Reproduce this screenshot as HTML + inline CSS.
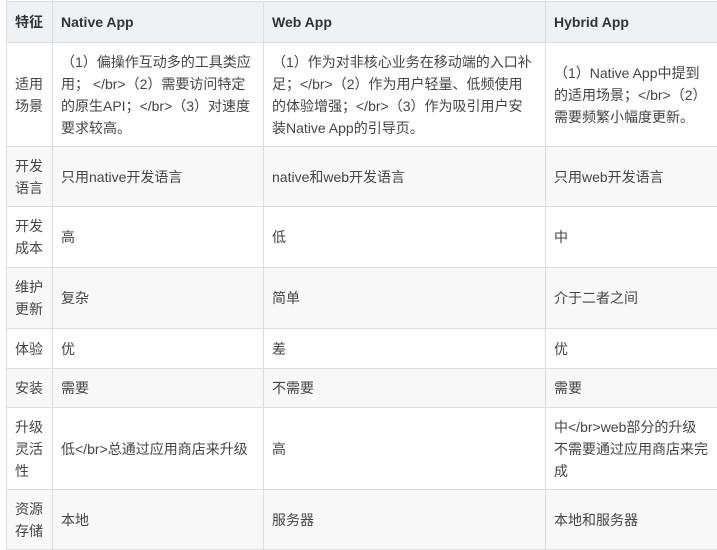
<!DOCTYPE html>
<html><head><meta charset="utf-8"><style>
body{margin:0;background:#fff;font-family:"Liberation Sans","Noto Sans CJK SC",sans-serif;font-size:14px;color:#444;}
table{position:absolute;left:6px;top:1px;border-collapse:collapse;table-layout:fixed;width:716px;}
td,th{border:1px solid #ddd;padding:0 4px 0 8px;line-height:22px;text-align:left;vertical-align:middle;overflow:hidden;}
th{background:#eff2f5;font-weight:bold;font-size:14px;height:40px;color:#333;}
tr.g td{background:#f8f8f8;}
td:nth-child(2),td:nth-child(3){padding-right:12px;}
td:nth-child(4){padding-right:14px;}
</style></head><body>
<table>
<colgroup><col style="width:46px"><col style="width:211px"><col style="width:282px"><col style="width:177px"></colgroup>
<tr><th>特征</th><th>Native App</th><th>Web App</th><th>Hybrid App</th></tr>
<tr style="height:104px"><td>适用场景</td><td>（1）偏操作互动多的工具类应用； &lt;/br&gt;（2）需要访问特定的原生API；&lt;/br&gt;（3）对速度要求较高。</td><td>（1）作为对非核心业务在移动端的入口补足；&lt;/br&gt;（2）作为用户轻量、低频使用的体验增强；&lt;/br&gt;（3）作为吸引用户安装Native App的引导页。</td><td>（1）Native App中提到的适用场景；&lt;/br&gt;（2）需要频繁小幅度更新。</td></tr>
<tr class="g" style="height:60px"><td>开发语言</td><td>只用native开发语言</td><td>native和web开发语言</td><td>只用web开发语言</td></tr>
<tr style="height:61px"><td>开发成本</td><td>高</td><td>低</td><td>中</td></tr>
<tr class="g" style="height:61px"><td>维护更新</td><td>复杂</td><td>简单</td><td>介于二者之间</td></tr>
<tr style="height:40px"><td>体验</td><td>优</td><td>差</td><td>优</td></tr>
<tr class="g" style="height:39px"><td>安装</td><td>需要</td><td>不需要</td><td>需要</td></tr>
<tr style="height:82px"><td>升级灵活性</td><td>低&lt;/br&gt;总通过应用商店来升级</td><td>高</td><td>中&lt;/br&gt;web部分的升级不需要通过应用商店来完成</td></tr>
<tr class="g" style="height:60px"><td>资源存储</td><td>本地</td><td>服务器</td><td>本地和服务器</td></tr>
</table>
</body></html>
